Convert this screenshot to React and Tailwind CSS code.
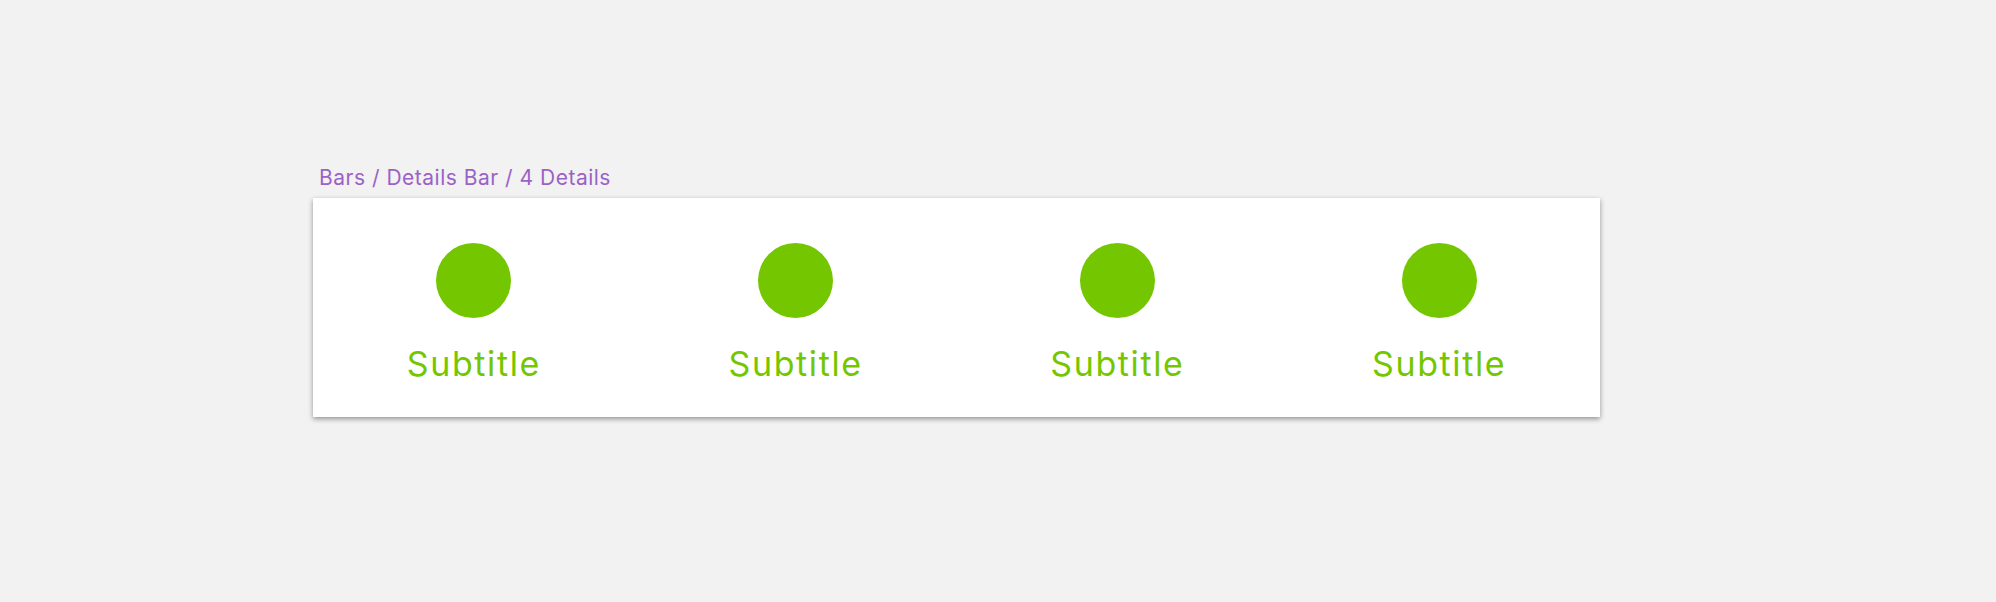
import React from "react";

const details = ["Subtitle", "Subtitle", "Subtitle", "Subtitle"];

export default function App() {
    return (
        <div className="w-full h-[602px] bg-[#f2f2f2] pt-[165px] pl-[313px] font-['Inter','Liberation_Sans',sans-serif]">
            {/* Frame label */}
            <p className="ml-[6px] text-[21px] leading-[26px] text-[#9b62c6] tracking-[0.5px]">
                Bars / Details Bar / 4 Details
            </p>

            {/* Details bar */}
            <div className="mt-[7px] w-[1287px] h-[219px] bg-white shadow-[0_2px_5px_rgba(0,0,0,0.4)] flex">
                {details.map((label, i) => (
                    <div key={i} className="flex-1 flex flex-col items-center pt-[45px]">
                        <div className="w-[75px] h-[75px] rounded-full bg-[#74c700]"></div>
                        <span className="mt-[24px] text-[34px] leading-[44px] tracking-[1.6px] text-[#74c700]">{label}</span>
                    </div>
                ))}
            </div>
        </div>
    );
}
